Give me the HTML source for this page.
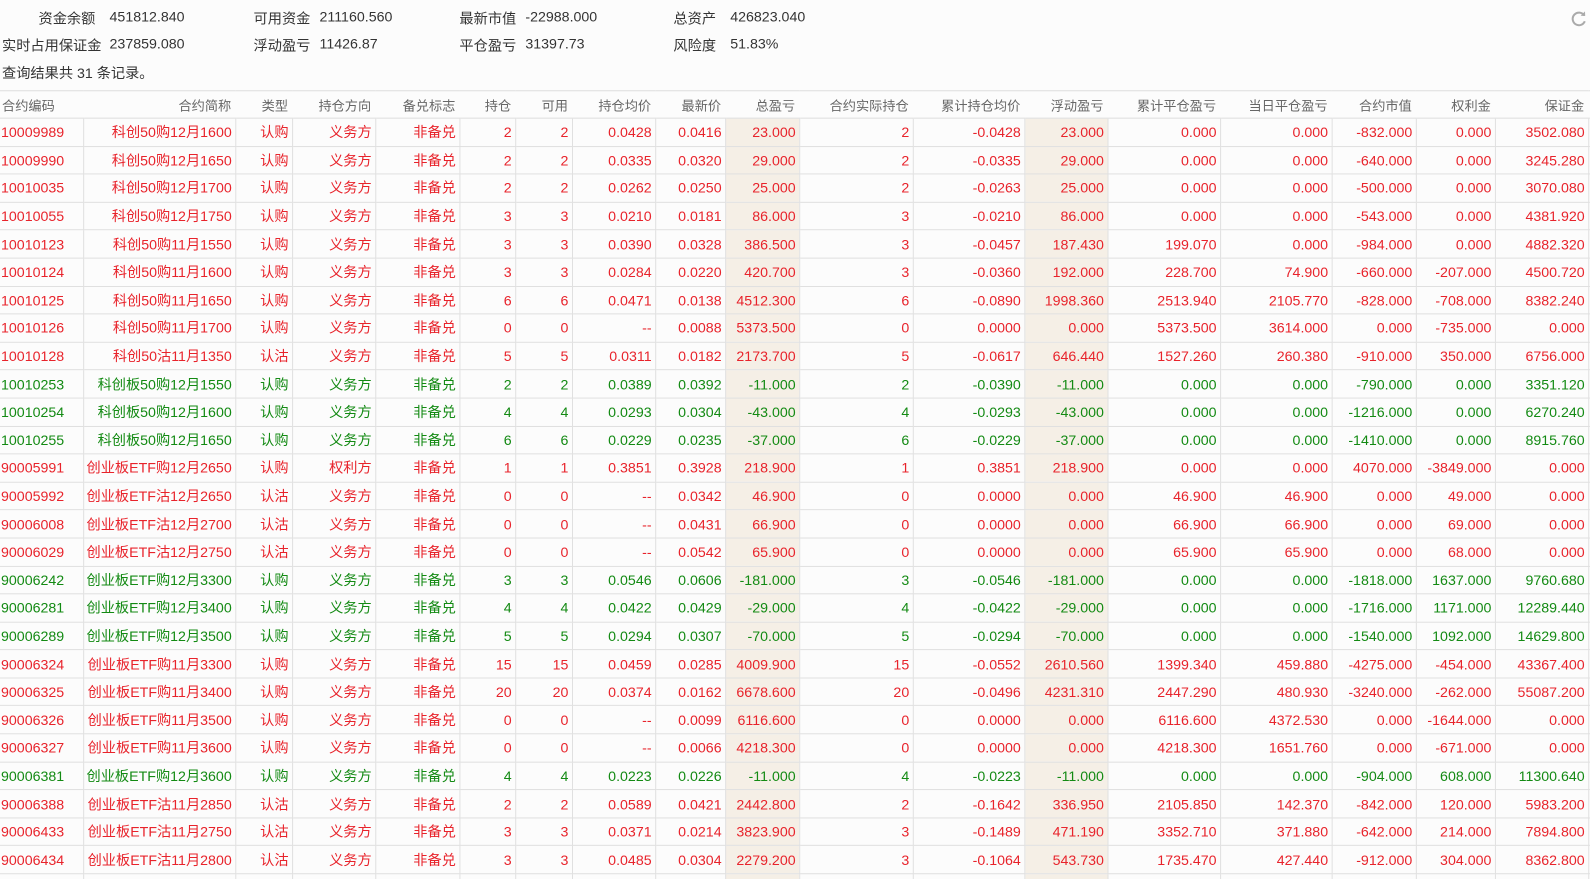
<!DOCTYPE html>
<html><head><meta charset="utf-8">
<style>
*{margin:0;padding:0;box-sizing:border-box}
html{width:1590px;height:879px;overflow:hidden}
body{width:1590px;height:879px;overflow:hidden;background:#fcfcfc;font-family:"Liberation Sans","Noto Sans CJK SC",sans-serif;font-size:14px;color:#333;position:relative}
#w{position:absolute;left:0;top:0;width:1568px;height:867px;transform:scale(1.0142);transform-origin:0 0}
.s{position:absolute;white-space:nowrap;font-size:14px;color:#333}
table{position:absolute;left:0;top:89px;width:1568px;border-collapse:collapse;table-layout:fixed}
th{height:27px;font-weight:normal;color:#666;font-size:13px;text-align:right;padding-right:4px;border-top:1px solid #ddd;border-bottom:1px solid #ddd;white-space:nowrap;overflow:hidden}
th:first-child{text-align:left;padding-left:2px}
td{height:27.6px;text-align:right;padding:0 3px 0 0;border:1px solid #e0e0e0;border-left:none;white-space:nowrap;overflow:hidden}
td:first-child{text-align:left;padding-left:1px}
td:last-child{border-right:none}
td:nth-child(10),td:nth-child(13){background:#f5efe6}
tr.r td{color:#e8232b}
tr.g td{color:#138a13}
</style></head><body><div id="w">
<div class="s" style="left:38px;top:8px">资金余额</div><div class="s" style="left:108px;top:8px">451812.840</div>
<div class="s" style="left:250px;top:8px">可用资金</div><div class="s" style="left:315px;top:8px">211160.560</div>
<div class="s" style="left:453px;top:8px">最新市值</div><div class="s" style="left:518px;top:8px">-22988.000</div>
<div class="s" style="left:664px;top:8px">总资产</div><div class="s" style="left:720px;top:8px">426823.040</div>
<div class="s" style="left:2px;top:35px">实时占用保证金</div><div class="s" style="left:108px;top:35px">237859.080</div>
<div class="s" style="left:250px;top:35px">浮动盈亏</div><div class="s" style="left:315px;top:35px">11426.87</div>
<div class="s" style="left:453px;top:35px">平仓盈亏</div><div class="s" style="left:518px;top:35px">31397.73</div>
<div class="s" style="left:664px;top:35px">风险度</div><div class="s" style="left:720px;top:35px">51.83%</div>
<div class="s" style="left:2px;top:62px">查询结果共 31 条记录。</div>
<svg style="position:absolute;left:1548px;top:10px" width="17" height="17" viewBox="0 0 17 17"><path d="M14 5.2A6.2 6.2 0 1 0 14.6 11" fill="none" stroke="#aaa" stroke-width="2"/><path d="M10.5 5.5L15 5.8L14.8 1.2Z" fill="#aaa"/></svg>
<table>
<colgroup><col style="width:82px"><col style="width:150px"><col style="width:56px"><col style="width:82px"><col style="width:83px"><col style="width:55px"><col style="width:56px"><col style="width:82px"><col style="width:69px"><col style="width:73px"><col style="width:112px"><col style="width:110px"><col style="width:82px"><col style="width:111px"><col style="width:110px"><col style="width:83px"><col style="width:78px"><col style="width:92px"><col style="width:2px"></colgroup>
<tr><th>合约编码</th><th>合约简称</th><th>类型</th><th>持仓方向</th><th>备兑标志</th><th>持仓</th><th>可用</th><th>持仓均价</th><th>最新价</th><th>总盈亏</th><th>合约实际持仓</th><th>累计持仓均价</th><th>浮动盈亏</th><th>累计平仓盈亏</th><th>当日平仓盈亏</th><th>合约市值</th><th>权利金</th><th>保证金</th><th></th></tr>
<tr class="r"><td>10009989</td><td>科创50购12月1600</td><td>认购</td><td>义务方</td><td>非备兑</td><td>2</td><td>2</td><td>0.0428</td><td>0.0416</td><td>23.000</td><td>2</td><td>-0.0428</td><td>23.000</td><td>0.000</td><td>0.000</td><td>-832.000</td><td>0.000</td><td>3502.080</td><td></td></tr>
<tr class="r"><td>10009990</td><td>科创50购12月1650</td><td>认购</td><td>义务方</td><td>非备兑</td><td>2</td><td>2</td><td>0.0335</td><td>0.0320</td><td>29.000</td><td>2</td><td>-0.0335</td><td>29.000</td><td>0.000</td><td>0.000</td><td>-640.000</td><td>0.000</td><td>3245.280</td><td></td></tr>
<tr class="r"><td>10010035</td><td>科创50购12月1700</td><td>认购</td><td>义务方</td><td>非备兑</td><td>2</td><td>2</td><td>0.0262</td><td>0.0250</td><td>25.000</td><td>2</td><td>-0.0263</td><td>25.000</td><td>0.000</td><td>0.000</td><td>-500.000</td><td>0.000</td><td>3070.080</td><td></td></tr>
<tr class="r"><td>10010055</td><td>科创50购12月1750</td><td>认购</td><td>义务方</td><td>非备兑</td><td>3</td><td>3</td><td>0.0210</td><td>0.0181</td><td>86.000</td><td>3</td><td>-0.0210</td><td>86.000</td><td>0.000</td><td>0.000</td><td>-543.000</td><td>0.000</td><td>4381.920</td><td></td></tr>
<tr class="r"><td>10010123</td><td>科创50购11月1550</td><td>认购</td><td>义务方</td><td>非备兑</td><td>3</td><td>3</td><td>0.0390</td><td>0.0328</td><td>386.500</td><td>3</td><td>-0.0457</td><td>187.430</td><td>199.070</td><td>0.000</td><td>-984.000</td><td>0.000</td><td>4882.320</td><td></td></tr>
<tr class="r"><td>10010124</td><td>科创50购11月1600</td><td>认购</td><td>义务方</td><td>非备兑</td><td>3</td><td>3</td><td>0.0284</td><td>0.0220</td><td>420.700</td><td>3</td><td>-0.0360</td><td>192.000</td><td>228.700</td><td>74.900</td><td>-660.000</td><td>-207.000</td><td>4500.720</td><td></td></tr>
<tr class="r"><td>10010125</td><td>科创50购11月1650</td><td>认购</td><td>义务方</td><td>非备兑</td><td>6</td><td>6</td><td>0.0471</td><td>0.0138</td><td>4512.300</td><td>6</td><td>-0.0890</td><td>1998.360</td><td>2513.940</td><td>2105.770</td><td>-828.000</td><td>-708.000</td><td>8382.240</td><td></td></tr>
<tr class="r"><td>10010126</td><td>科创50购11月1700</td><td>认购</td><td>义务方</td><td>非备兑</td><td>0</td><td>0</td><td>--</td><td>0.0088</td><td>5373.500</td><td>0</td><td>0.0000</td><td>0.000</td><td>5373.500</td><td>3614.000</td><td>0.000</td><td>-735.000</td><td>0.000</td><td></td></tr>
<tr class="r"><td>10010128</td><td>科创50沽11月1350</td><td>认沽</td><td>义务方</td><td>非备兑</td><td>5</td><td>5</td><td>0.0311</td><td>0.0182</td><td>2173.700</td><td>5</td><td>-0.0617</td><td>646.440</td><td>1527.260</td><td>260.380</td><td>-910.000</td><td>350.000</td><td>6756.000</td><td></td></tr>
<tr class="g"><td>10010253</td><td>科创板50购12月1550</td><td>认购</td><td>义务方</td><td>非备兑</td><td>2</td><td>2</td><td>0.0389</td><td>0.0392</td><td>-11.000</td><td>2</td><td>-0.0390</td><td>-11.000</td><td>0.000</td><td>0.000</td><td>-790.000</td><td>0.000</td><td>3351.120</td><td></td></tr>
<tr class="g"><td>10010254</td><td>科创板50购12月1600</td><td>认购</td><td>义务方</td><td>非备兑</td><td>4</td><td>4</td><td>0.0293</td><td>0.0304</td><td>-43.000</td><td>4</td><td>-0.0293</td><td>-43.000</td><td>0.000</td><td>0.000</td><td>-1216.000</td><td>0.000</td><td>6270.240</td><td></td></tr>
<tr class="g"><td>10010255</td><td>科创板50购12月1650</td><td>认购</td><td>义务方</td><td>非备兑</td><td>6</td><td>6</td><td>0.0229</td><td>0.0235</td><td>-37.000</td><td>6</td><td>-0.0229</td><td>-37.000</td><td>0.000</td><td>0.000</td><td>-1410.000</td><td>0.000</td><td>8915.760</td><td></td></tr>
<tr class="r"><td>90005991</td><td>创业板ETF购12月2650</td><td>认购</td><td>权利方</td><td>非备兑</td><td>1</td><td>1</td><td>0.3851</td><td>0.3928</td><td>218.900</td><td>1</td><td>0.3851</td><td>218.900</td><td>0.000</td><td>0.000</td><td>4070.000</td><td>-3849.000</td><td>0.000</td><td></td></tr>
<tr class="r"><td>90005992</td><td>创业板ETF沽12月2650</td><td>认沽</td><td>义务方</td><td>非备兑</td><td>0</td><td>0</td><td>--</td><td>0.0342</td><td>46.900</td><td>0</td><td>0.0000</td><td>0.000</td><td>46.900</td><td>46.900</td><td>0.000</td><td>49.000</td><td>0.000</td><td></td></tr>
<tr class="r"><td>90006008</td><td>创业板ETF沽12月2700</td><td>认沽</td><td>义务方</td><td>非备兑</td><td>0</td><td>0</td><td>--</td><td>0.0431</td><td>66.900</td><td>0</td><td>0.0000</td><td>0.000</td><td>66.900</td><td>66.900</td><td>0.000</td><td>69.000</td><td>0.000</td><td></td></tr>
<tr class="r"><td>90006029</td><td>创业板ETF沽12月2750</td><td>认沽</td><td>义务方</td><td>非备兑</td><td>0</td><td>0</td><td>--</td><td>0.0542</td><td>65.900</td><td>0</td><td>0.0000</td><td>0.000</td><td>65.900</td><td>65.900</td><td>0.000</td><td>68.000</td><td>0.000</td><td></td></tr>
<tr class="g"><td>90006242</td><td>创业板ETF购12月3300</td><td>认购</td><td>义务方</td><td>非备兑</td><td>3</td><td>3</td><td>0.0546</td><td>0.0606</td><td>-181.000</td><td>3</td><td>-0.0546</td><td>-181.000</td><td>0.000</td><td>0.000</td><td>-1818.000</td><td>1637.000</td><td>9760.680</td><td></td></tr>
<tr class="g"><td>90006281</td><td>创业板ETF购12月3400</td><td>认购</td><td>义务方</td><td>非备兑</td><td>4</td><td>4</td><td>0.0422</td><td>0.0429</td><td>-29.000</td><td>4</td><td>-0.0422</td><td>-29.000</td><td>0.000</td><td>0.000</td><td>-1716.000</td><td>1171.000</td><td>12289.440</td><td></td></tr>
<tr class="g"><td>90006289</td><td>创业板ETF购12月3500</td><td>认购</td><td>义务方</td><td>非备兑</td><td>5</td><td>5</td><td>0.0294</td><td>0.0307</td><td>-70.000</td><td>5</td><td>-0.0294</td><td>-70.000</td><td>0.000</td><td>0.000</td><td>-1540.000</td><td>1092.000</td><td>14629.800</td><td></td></tr>
<tr class="r"><td>90006324</td><td>创业板ETF购11月3300</td><td>认购</td><td>义务方</td><td>非备兑</td><td>15</td><td>15</td><td>0.0459</td><td>0.0285</td><td>4009.900</td><td>15</td><td>-0.0552</td><td>2610.560</td><td>1399.340</td><td>459.880</td><td>-4275.000</td><td>-454.000</td><td>43367.400</td><td></td></tr>
<tr class="r"><td>90006325</td><td>创业板ETF购11月3400</td><td>认购</td><td>义务方</td><td>非备兑</td><td>20</td><td>20</td><td>0.0374</td><td>0.0162</td><td>6678.600</td><td>20</td><td>-0.0496</td><td>4231.310</td><td>2447.290</td><td>480.930</td><td>-3240.000</td><td>-262.000</td><td>55087.200</td><td></td></tr>
<tr class="r"><td>90006326</td><td>创业板ETF购11月3500</td><td>认购</td><td>义务方</td><td>非备兑</td><td>0</td><td>0</td><td>--</td><td>0.0099</td><td>6116.600</td><td>0</td><td>0.0000</td><td>0.000</td><td>6116.600</td><td>4372.530</td><td>0.000</td><td>-1644.000</td><td>0.000</td><td></td></tr>
<tr class="r"><td>90006327</td><td>创业板ETF购11月3600</td><td>认购</td><td>义务方</td><td>非备兑</td><td>0</td><td>0</td><td>--</td><td>0.0066</td><td>4218.300</td><td>0</td><td>0.0000</td><td>0.000</td><td>4218.300</td><td>1651.760</td><td>0.000</td><td>-671.000</td><td>0.000</td><td></td></tr>
<tr class="g"><td>90006381</td><td>创业板ETF购12月3600</td><td>认购</td><td>义务方</td><td>非备兑</td><td>4</td><td>4</td><td>0.0223</td><td>0.0226</td><td>-11.000</td><td>4</td><td>-0.0223</td><td>-11.000</td><td>0.000</td><td>0.000</td><td>-904.000</td><td>608.000</td><td>11300.640</td><td></td></tr>
<tr class="r"><td>90006388</td><td>创业板ETF沽11月2850</td><td>认沽</td><td>义务方</td><td>非备兑</td><td>2</td><td>2</td><td>0.0589</td><td>0.0421</td><td>2442.800</td><td>2</td><td>-0.1642</td><td>336.950</td><td>2105.850</td><td>142.370</td><td>-842.000</td><td>120.000</td><td>5983.200</td><td></td></tr>
<tr class="r"><td>90006433</td><td>创业板ETF沽11月2750</td><td>认沽</td><td>义务方</td><td>非备兑</td><td>3</td><td>3</td><td>0.0371</td><td>0.0214</td><td>3823.900</td><td>3</td><td>-0.1489</td><td>471.190</td><td>3352.710</td><td>371.880</td><td>-642.000</td><td>214.000</td><td>7894.800</td><td></td></tr>
<tr class="r"><td>90006434</td><td>创业板ETF沽11月2800</td><td>认沽</td><td>义务方</td><td>非备兑</td><td>3</td><td>3</td><td>0.0485</td><td>0.0304</td><td>2279.200</td><td>3</td><td>-0.1064</td><td>543.730</td><td>1735.470</td><td>427.440</td><td>-912.000</td><td>304.000</td><td>8362.800</td><td></td></tr>
<tr class="r"><td></td><td></td><td></td><td></td><td></td><td></td><td></td><td></td><td></td><td></td><td></td><td></td><td></td><td></td><td></td><td></td><td></td><td></td><td></td></tr>
</table>
</div></body></html>
